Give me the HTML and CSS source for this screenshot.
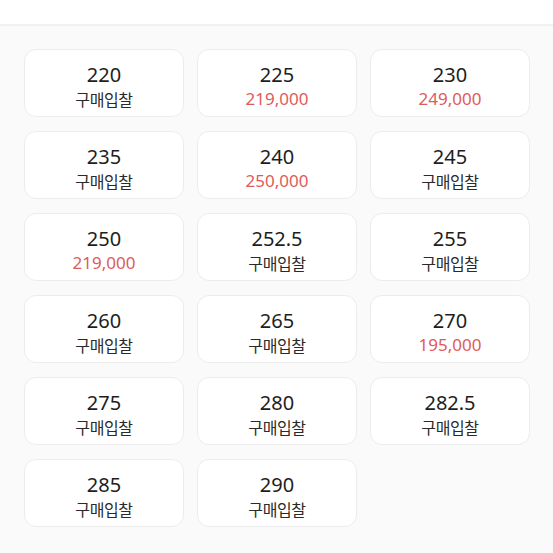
FILE: index.html
```html
<!DOCTYPE html>
<html lang="ko">
<head>
<meta charset="UTF-8">
<meta name="viewport" content="width=device-width, initial-scale=1">
<link rel="stylesheet" href="styles.css">
</head>
<body>
<div class="topbar"></div>
<div class="sizes">
  <div class="size"><div class="num">220</div><div class="bid">구매입찰</div></div>
  <div class="size"><div class="num">225</div><div class="price">219,000</div></div>
  <div class="size"><div class="num">230</div><div class="price">249,000</div></div>
  <div class="size"><div class="num">235</div><div class="bid">구매입찰</div></div>
  <div class="size"><div class="num">240</div><div class="price">250,000</div></div>
  <div class="size"><div class="num">245</div><div class="bid">구매입찰</div></div>
  <div class="size"><div class="num">250</div><div class="price">219,000</div></div>
  <div class="size"><div class="num">252.5</div><div class="bid">구매입찰</div></div>
  <div class="size"><div class="num">255</div><div class="bid">구매입찰</div></div>
  <div class="size"><div class="num">260</div><div class="bid">구매입찰</div></div>
  <div class="size"><div class="num">265</div><div class="bid">구매입찰</div></div>
  <div class="size"><div class="num">270</div><div class="price">195,000</div></div>
  <div class="size"><div class="num">275</div><div class="bid">구매입찰</div></div>
  <div class="size"><div class="num">280</div><div class="bid">구매입찰</div></div>
  <div class="size"><div class="num">282.5</div><div class="bid">구매입찰</div></div>
  <div class="size"><div class="num">285</div><div class="bid">구매입찰</div></div>
  <div class="size"><div class="num">290</div><div class="bid">구매입찰</div></div>
</div>
</body>
</html>
```
FILE: styles.css
```css
html, body{
  margin:0;
  padding:0;
}
body{
  background:#fafafa;
  font-family:"Noto Sans", "Noto Sans CJK KR", sans-serif;
  color:#222;
  height:553px;
  overflow:hidden;
}
.topbar{
  height:24px;
  background:#fff;
  border-bottom:2px solid #f1f1f1;
}
.sizes{
  display:grid;
  grid-template-columns:repeat(3, 160px);
  column-gap:13px;
  row-gap:14px;
  padding:23px 23px 0 24px;
}
.size{
  height:68px;
  box-sizing:border-box;
  padding-top:13px;
  background:#fff;
  border:1px solid #ececec;
  border-radius:12px;
  text-align:center;
}
.num{
  font-size:20px;
  line-height:24px;
  color:#1e1e1e;
}
.price{
  margin-top:2px;
  font-size:17px;
  line-height:20px;
  color:#de5b5b;
}
.bid{
  margin-top:2px;
  font-family:"Noto Sans CJK KR", sans-serif;
  font-size:16px;
  line-height:20px;
  letter-spacing:-0.4px;
  color:#2a2a2a;
}
```
